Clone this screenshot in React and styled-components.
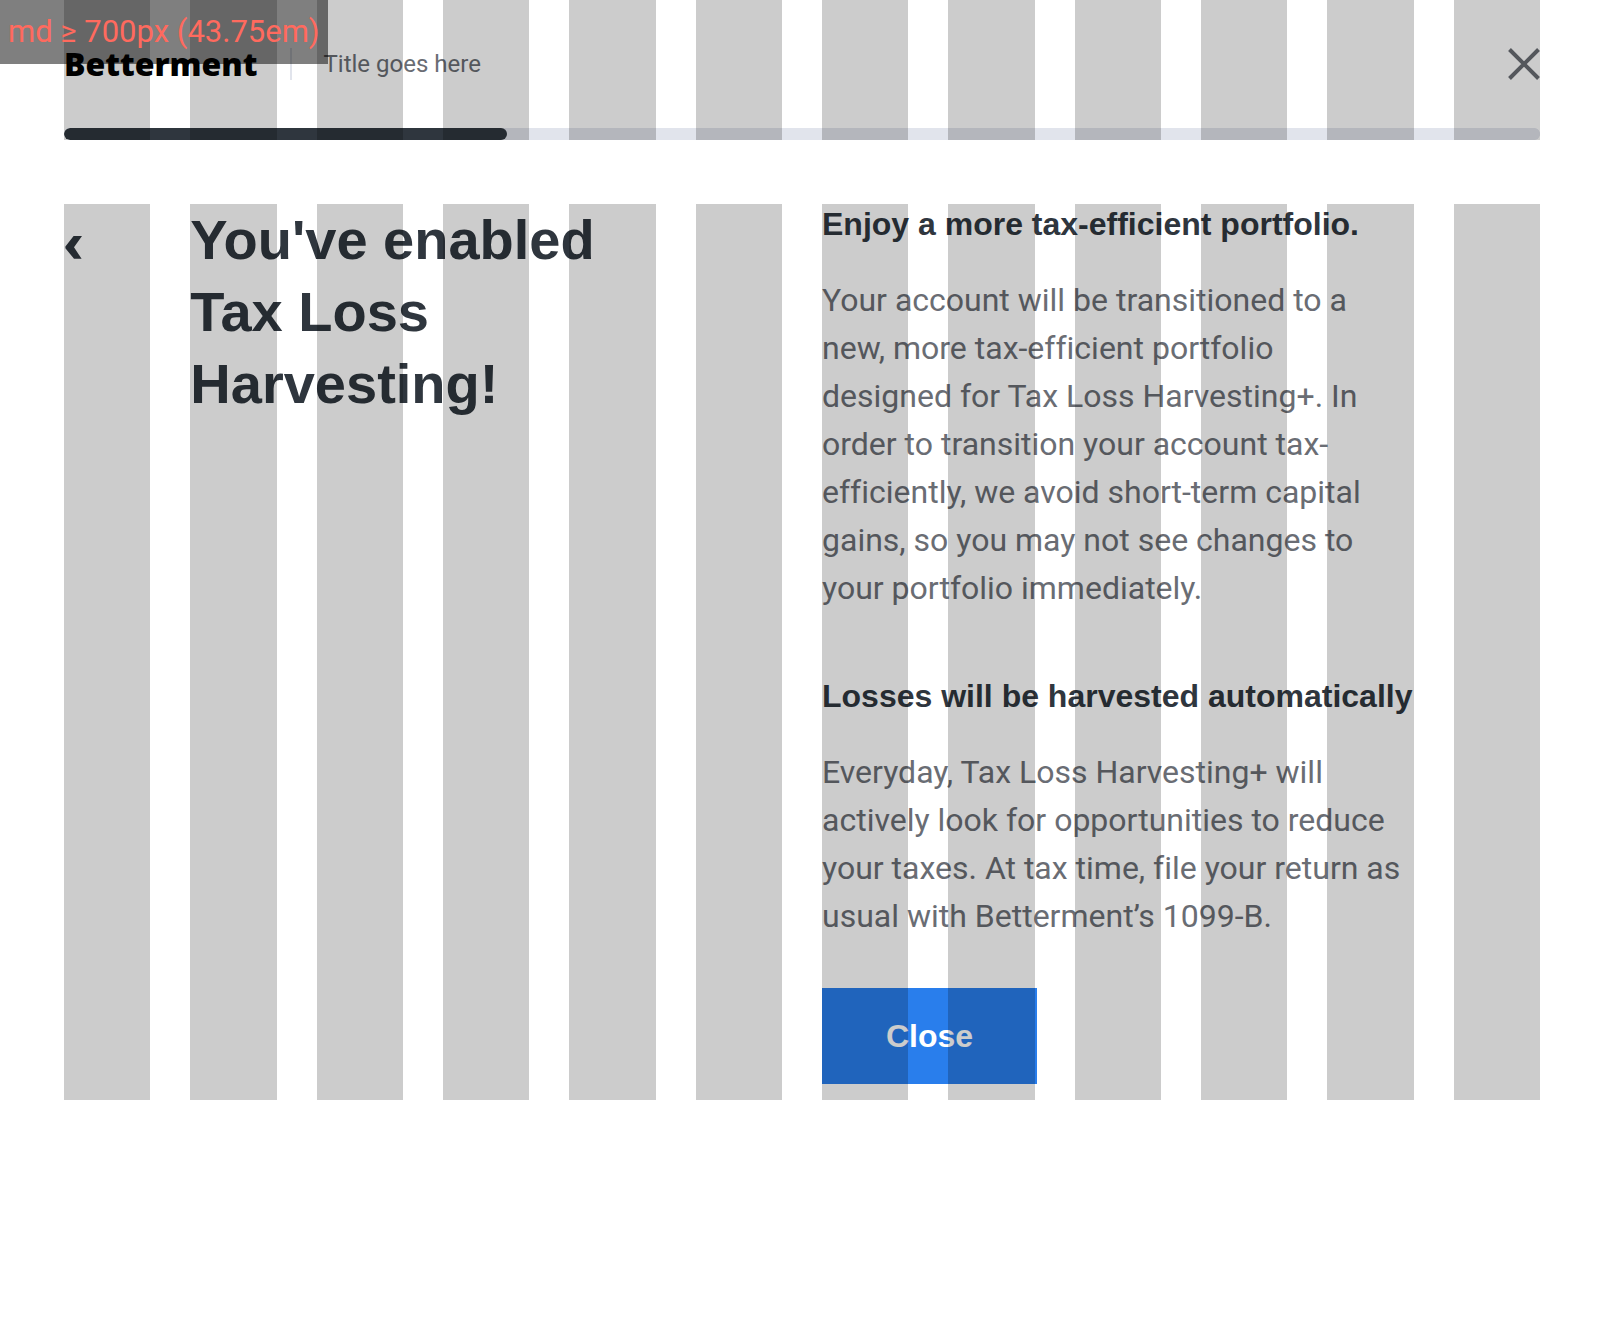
import React from 'react';
import styled, { createGlobalStyle } from 'styled-components';

const ink = '#2f363e';
const muted = '#6a6d74';
const line = '#e1e4ec';
const textFont = 'Roboto, "Liberation Sans", sans-serif';
const boldFont = '"Liberation Sans", Arial, sans-serif';

const GlobalStyle = createGlobalStyle`
  *, *::before, *::after { box-sizing: border-box; }
  body {
    margin: 0;
    background: #fff;
    color: ${muted};
    font: 400 32px/48px ${textFont};
    font-variant-ligatures: none;
  }
  h1, h2, p { margin: 0; }
`;

const Page = styled.div`
  position: relative;
  min-height: 100vh;
`;

const Container = styled.div`
  position: relative;
  padding: 0 64px;
`;

const Columns = styled.div`
  display: grid;
  grid-template-columns: repeat(12, minmax(0, 1fr));
  column-gap: 40px;
`;

const Overlay = styled(Columns)`
  position: absolute;
  inset: 0 64px;
  z-index: 1;
  pointer-events: none;
`;

const OverlayColumn = styled.div`
  background: rgba(0, 0, 0, 0.2);
`;

const BreakpointLabel = styled.div`
  position: absolute;
  top: 0;
  left: 0;
  z-index: 2;
  padding: 8px;
  background: rgba(0, 0, 0, 0.5);
  color: #ff6a5e;
  font-size: 31px;
`;

const Header = styled.header`
  display: flex;
  align-items: center;
  gap: 32px;
  height: 128px;
`;

const Logo = styled.a`
  color: #000;
  font: 800 32px/32px "Open Sans", Inter, sans-serif;
  text-decoration: none;
`;

const Divider = styled.div`
  width: 2px;
  height: 32px;
  background: ${line};
`;

const Title = styled.div`
  flex: 1;
  font-size: 24px;
  line-height: 32px;
`;

const IconButton = styled.button`
  display: flex;
  justify-self: start;
  align-self: start;
  padding: ${(p) => p.$padding || '0'};
  border: 0;
  background: none;
  color: ${(p) => p.$color};
  cursor: pointer;
`;

const CloseButton = styled(IconButton)`
  align-self: center;
`;

const Progress = styled.progress`
  display: block;
  appearance: none;
  width: 100%;
  height: 12px;
  border: 0;
  border-radius: 6px;
  overflow: hidden;
  background: ${line};

  &::-webkit-progress-bar {
    background: ${line};
    border-radius: 6px;
  }
  &::-webkit-progress-value {
    background: ${ink};
    border-radius: 6px;
  }
  &::-moz-progress-bar {
    background: ${ink};
    border-radius: 6px;
  }
`;

const Main = styled(Container).attrs({ as: 'main' })`
  margin-top: 64px;
  padding-bottom: 16px;
`;

const Heading = styled.h1`
  grid-column: 2 / span 4;
  color: ${ink};
  font: 700 56px/72px ${boldFont};
`;

const Content = styled.div`
  grid-column: 7 / span 5;
  display: flex;
  flex-direction: column;
  align-items: flex-start;
  gap: 48px;
`;

const Sections = styled.div`
  display: flex;
  flex-direction: column;
  gap: 64px;
`;

const Section = styled.section`
  display: flex;
  flex-direction: column;
  gap: 32px;
`;

const Subheading = styled.h2`
  color: ${ink};
  font: 700 32px/40px ${boldFont};
`;

const Copy = styled.p`
  padding-right: 8px;
`;

const Button = styled.button`
  padding: 24px 64px;
  border: 0;
  background: #297eec;
  color: #fff;
  font: 700 32px/48px ${boldFont};
  cursor: pointer;
`;

const GridOverlay = () => (
  <Overlay aria-hidden="true">
    {Array.from({ length: 12 }, (_, i) => (
      <OverlayColumn key={i} />
    ))}
  </Overlay>
);

const CloseIcon = () => (
  <svg width="32" height="32" viewBox="0 0 32 32" fill="none" stroke="currentColor" strokeWidth="4">
    <path d="M1.5 1.5 30.5 30.5M30.5 1.5 1.5 30.5" />
  </svg>
);

const BackIcon = () => (
  <svg width="18" height="24" viewBox="0 0 18 24" fill="currentColor">
    <path d="M9.6 0H18L10 11.2 17.6 22.8H10L1.4 12.2V10.6Z" />
  </svg>
);

const sections = [
  {
    heading: 'Enjoy a more tax-efficient portfolio.',
    text: 'Your account will be transitioned to a new, more tax-efficient portfolio designed for Tax Loss Harvesting+. In order to transition your account tax-efficiently, we avoid short-term capital gains, so you may not see changes to your portfolio immediately.',
  },
  {
    heading: 'Losses will be harvested automatically',
    text: 'Everyday, Tax Loss Harvesting+ will actively look for opportunities to reduce your taxes. At tax time, file your return as usual with Betterment’s 1099-B.',
  },
];

export default function App() {
  return (
    <Page>
      <GlobalStyle />
      <BreakpointLabel>md ≥ 700px (43.75em)</BreakpointLabel>
      <Container>
        <Header>
          <Logo href="#">Betterment</Logo>
          <Divider />
          <Title>Title goes here</Title>
          <CloseButton type="button" aria-label="Close" $color={muted}>
            <CloseIcon />
          </CloseButton>
        </Header>
        <Progress value="30" max="100" aria-label="Progress" />
        <GridOverlay />
      </Container>
      <Main>
        <Columns>
          <IconButton type="button" aria-label="Back" $color={ink} $padding="32px 0">
            <BackIcon />
          </IconButton>
          <Heading>You've enabled Tax Loss Harvesting!</Heading>
          <Content>
            <Sections>
              {sections.map((s) => (
                <Section key={s.heading}>
                  <Subheading>{s.heading}</Subheading>
                  <Copy>{s.text}</Copy>
                </Section>
              ))}
            </Sections>
            <Button type="button">Close</Button>
          </Content>
        </Columns>
        <GridOverlay />
      </Main>
    </Page>
  );
}
